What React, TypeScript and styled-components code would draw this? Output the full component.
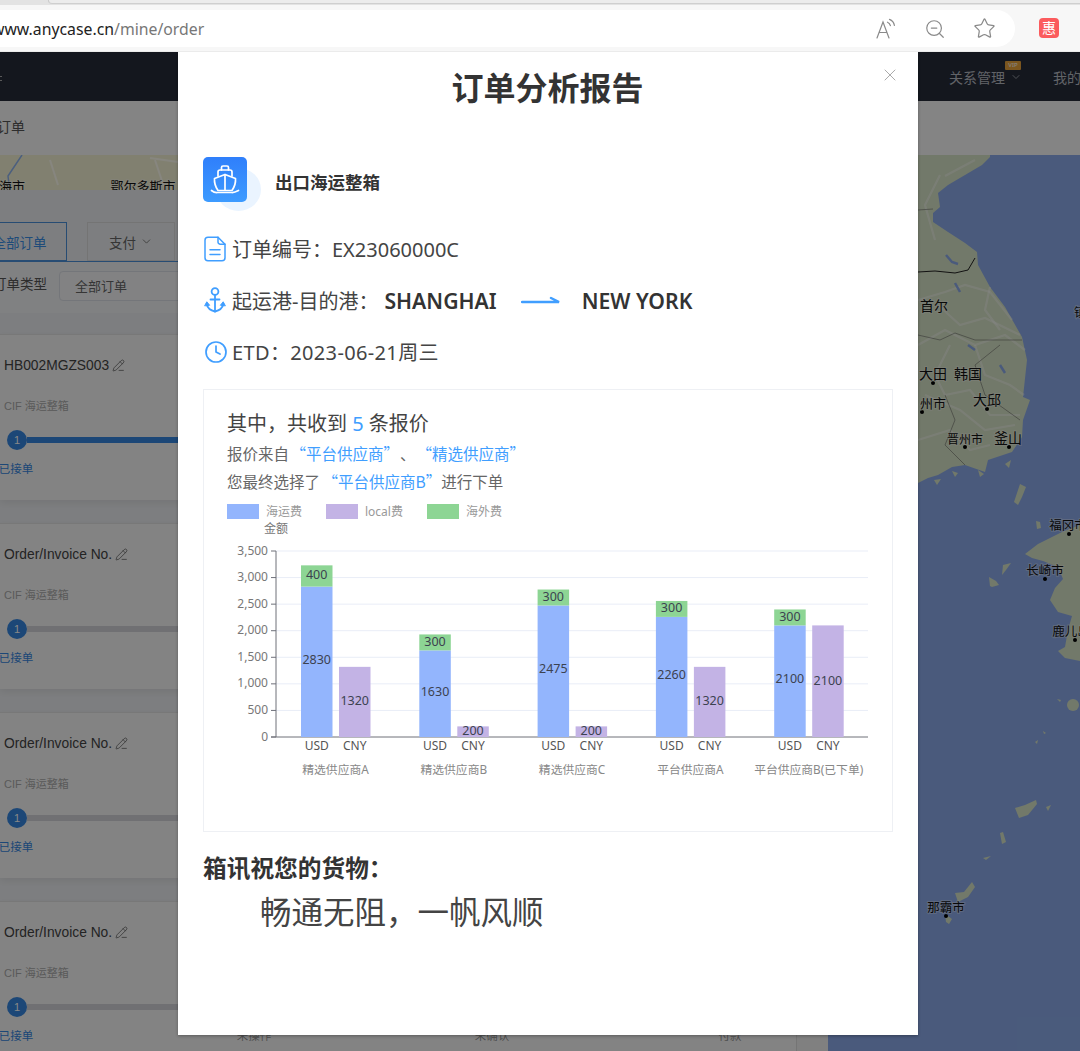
import React from "react";
import styled, { createGlobalStyle } from "styled-components";
import { ChevronDown, Clock, PencilLine, Star, X, ZoomOut } from "lucide-react";

const FONT = `"Noto Sans", "Noto Sans CJK SC", sans-serif`;
const CJK = `"Noto Sans CJK SC", sans-serif`;
const ARIAL = `"Liberation Sans", "Noto Sans CJK SC", sans-serif`;

const GlobalStyle = createGlobalStyle`
  html, body {
    margin: 0;
    padding: 0;
    width: 1080px;
    height: 1051px;
    overflow: hidden;
    font-family: ${FONT};
    background: #fff;
  }
  * { box-sizing: border-box; }
`;

type Stack = { label: string; usd: number; cny: number; extra: number };

const suppliers: Stack[] = [
  { label: "精选供应商A", usd: 2830, cny: 1320, extra: 400 },
  { label: "精选供应商B", usd: 1630, cny: 200, extra: 300 },
  { label: "精选供应商C", usd: 2475, cny: 200, extra: 300 },
  { label: "平台供应商A", usd: 2260, cny: 1320, extra: 300 },
  { label: "平台供应商B(已下单)", usd: 2100, cny: 2100, extra: 300 },
];

const orders = ["HB002MGZS003", "Order/Invoice No.", "Order/Invoice No.", "Order/Invoice No."];

const BLUE = "#93b5fd";
const PURPLE = "#c3b3e5";
const GREEN = "#8dd594";
const LAND = "#d8e4c8";
const AXIS_ZERO = 737;
const AXIS_TOP = 551;
const scale = (AXIS_ZERO - AXIS_TOP) / 3500;

function BarChart() {
  const ticks = [0, 500, 1000, 1500, 2000, 2500, 3000, 3500];
  return (
    <ChartSvg width="660" height="300" viewBox="227 495 660 300">
      <rect x="227" y="504" width="32" height="15" fill={BLUE} />
      <ChartText x="266" y="516" fontSize="12" fill="#999">海运费</ChartText>
      <rect x="326" y="504" width="32" height="15" fill={PURPLE} />
      <ChartText x="365" y="516" fontSize="12" fill="#999">local费</ChartText>
      <rect x="427" y="504" width="32" height="15" fill={GREEN} />
      <ChartText x="466" y="516" fontSize="12" fill="#999">海外费</ChartText>
      <ChartText x="264" y="533" fontSize="12" fill="#777">金额</ChartText>

      {ticks.map((t) => {
        const y = AXIS_ZERO - t * scale;
        return (
          <g key={t}>
            {t > 0 && <line x1="276" x2="868" y1={y} y2={y} stroke="#e9edf7" strokeWidth="1" />}
            <line x1="271" x2="276" y1={y} y2={y} stroke="#6e7079" />
            <ChartText x="268" y={y + 3.5} fontSize="12" fill="#777" textAnchor="end">
              {t.toLocaleString("en-US")}
            </ChartText>
          </g>
        );
      })}
      <line x1="276" x2="276" y1={AXIS_TOP} y2={AXIS_ZERO} stroke="#6e7079" />
      <line x1="271" x2="868" y1={AXIS_ZERO} y2={AXIS_ZERO} stroke="#6e7079" />

      {suppliers.map((s, i) => {
        const x = 301 + i * 118.3;
        const usdH = s.usd * scale;
        const extraH = s.extra * scale;
        const cnyH = s.cny * scale;
        return (
          <g key={s.label}>
            <rect x={x} y={AXIS_ZERO - usdH} width="31.5" height={usdH} fill={BLUE} />
            <rect x={x} y={AXIS_ZERO - usdH - extraH} width="31.5" height={extraH} fill={GREEN} />
            <rect x={x + 38} y={AXIS_ZERO - cnyH} width="31.5" height={cnyH} fill={PURPLE} />
            <ChartText x={x + 15.7} y={AXIS_ZERO - usdH / 2 + 2} fontSize="12.5" fill="#3c4250" textAnchor="middle">{s.usd}</ChartText>
            <ChartText x={x + 15.7} y={AXIS_ZERO - usdH - extraH / 2 + 3.5} fontSize="12.5" fill="#3c4250" textAnchor="middle">{s.extra}</ChartText>
            <ChartText x={x + 53.7} y={AXIS_ZERO - cnyH / 2 + 3.5} fontSize="12.5" fill="#3c4250" textAnchor="middle">{s.cny}</ChartText>
            <ChartText x={x + 15.7} y="750" fontSize="12" fill="#555" textAnchor="middle">USD</ChartText>
            <ChartText x={x + 53.7} y="750" fontSize="12" fill="#555" textAnchor="middle">CNY</ChartText>
            <ChartText x={x + 34.5} y="774" fontSize="11.8" fill="#888" textAnchor="middle">{s.label}</ChartText>
          </g>
        );
      })}
    </ChartSvg>
  );
}

function MapBackdrop() {
  const labels: [string, number, number, number][] = [
    ["海市", 12, 191, 13],
    ["鄂尔多斯市", 143, 191, 13],
    ["首尔", 934, 311, 14],
    ["大田", 933, 379, 14],
    ["韩国", 968, 379, 14],
    ["大邱", 987, 405, 14],
    ["州市", 933, 408, 13],
    ["晋州市", 965, 444, 12],
    ["釜山", 1008, 443, 14],
    ["福冈市", 1068, 530, 12.5],
    ["长崎市", 1045, 575, 12.5],
    ["鹿儿岛", 1071, 636, 12.5],
    ["那霸市", 946, 912, 12.5],
    ["镇", 1080, 317, 12],
  ];
  const dots = [[933, 383], [922, 412], [987, 409], [965, 447], [1009, 447], [1069, 534], [1045, 579], [1075, 640], [946, 916]];
  const roads = [
    "M918 300 L945 292 L965 285 L990 292 L1012 320",
    "M938 305 L960 325 L985 318 L1020 335",
    "M918 345 L945 330 L975 345 L1005 335 L1025 350",
    "M950 345 L935 375 L945 395 L970 390 L990 415 L1020 415",
    "M975 345 L985 375 L1010 385 L1024 395",
    "M925 395 L960 410 L985 430 L1015 425",
    "M990 287 L985 310 L1000 330",
    "M918 440 L950 430 L970 450 L990 445",
    "M940 175 L925 205 L935 240 M975 160 L945 176",
  ];
  const borders = [
    "M918 335 L940 340 L955 333 L975 340 L1000 340 L1022 340",
    "M945 395 L955 420 L945 445 L965 465",
    "M1000 345 L975 365 L985 395 L1020 420",
    "M918 210 L933 209",
  ];
  const islands = [
    "1020,484 1026,487 1022,497 1018,505 1014,502",
    "1036,521 1040,522 1041,528 1037,529",
    "989,577 996,581 999,585 992,587 990,586",
    "1003,565 1011,563 1006,570 1002,575",
    "1015,808 1025,805 1036,800 1037,804 1028,815 1019,818",
    "1000,833 1003,832 1006,842 1002,844",
    "983,858 991,856 986,860",
    "955,893 964,892 972,882 975,887 968,897 958,902",
    "945,914 952,919 949,924 946,922",
    "1046,807 1051,805 1048,811",
    "1057,699 1061,700 1060,702",
    "1035,742 1038,740 1037,744",
    "1043,731 1046,733 1044,734",
    "978,470 984,474 980,477",
    "952,471 958,473 955,477",
    "934,480 941,479 937,485",
    "1005,464 1011,460 1009,468",
  ];
  return (
    <MapSvg viewBox="0 155 1080 896" width="1080" height="896">
      <rect x="0" y="155" width="1080" height="896" fill="#8cabea" />
      <polygon
        fill={LAND}
        points="990,155 990,157 982,165 965,175 948,185 938,193 940,207 933,213 933,222 948,232 965,243 977,252 978,265 990,287 1005,307 1022,337 1027,360 1023,397 1030,400 1023,420 1022,437 1012,452 988,460 985,472 965,465 952,467 938,475 928,478 918,483 900,483 900,155"
      />
      <rect x="0" y="155" width="900" height="40" fill="#f4f2d4" />
      <path d="M22 155 L12 170 L8 176 L10 192" stroke="#8fb4ee" strokeWidth="1.5" fill="none" />
      <path d="M50 160 L58 185 M155 160 L165 190 M150 158 L178 162" stroke="#fffdf0" strokeWidth="2" fill="none" />
      <polygon
        fill={LAND}
        points="1080,525 1062,532 1048,539 1038,544 1025,554 1032,558 1043,561 1058,567 1063,579 1055,588 1050,600 1058,612 1072,616 1068,630 1065,647 1058,651 1065,658 1080,661"
      />
      {islands.map((pts) => (
        <polygon key={pts} fill={LAND} points={pts} />
      ))}
      <circle cx="1073" cy="705" r="6" fill={LAND} />
      {roads.map((d) => (
        <path key={d} d={d} fill="none" stroke="#fff" strokeOpacity="0.4" strokeWidth="2.2" />
      ))}
      <path d="M918 272 L935 271 L955 273 L968 270 L975 258" fill="none" stroke="#222" strokeWidth="1" />
      {borders.map((d) => (
        <path key={d} d={d} fill="none" stroke="#555" strokeOpacity="0.5" strokeWidth="1" />
      ))}
      <path d="M946 255 L952 262 L958 264 M955 283 L960 292 M968 345 L975 350 M1000 365 L1005 373" stroke="#8cabea" strokeWidth="2.5" fill="none" />
      {dots.map(([x, y]) => (
        <circle key={`${x}-${y}`} cx={x} cy={y} r="2" fill="#000" />
      ))}
      {labels.map(([text, x, y, size]) => (
        <MapLabel key={text} x={x} y={y} fontSize={size} textAnchor="middle">
          {text}
        </MapLabel>
      ))}
    </MapSvg>
  );
}

function ShipIcon() {
  return (
    <svg width="30" height="32" viewBox="0 0 30 32" fill="none" stroke="#fff" strokeWidth="1.7" strokeLinecap="round" strokeLinejoin="round">
      <path d="M11.5 6 V3.5 a1.5 1.5 0 0 1 1.5 -1.5 h4 a1.5 1.5 0 0 1 1.5 1.5 V6" />
      <path d="M8 12 V8 a2 2 0 0 1 2 -2 h10 a2 2 0 0 1 2 2 v4" />
      <path d="M15 10.5 L4.5 14.5 c-.3 4 .7 8 3.5 12 h14 c2.8 -4 3.8 -8 3.5 -12 Z" />
      <path d="M15 10.5 V26" />
      <path d="M1.5 26.5 c2 1.6 4 2.2 6 2 h14 c2 .2 4 -.4 7 -2" />
    </svg>
  );
}

function DocIcon() {
  return (
    <svg width="22" height="26" viewBox="0 0 22 26" fill="none" stroke="#409eff" strokeWidth="1.5" strokeLinejoin="round" strokeLinecap="round">
      <path d="M14 1.2 H4 a3 3 0 0 0 -3 3 V21.8 a3 3 0 0 0 3 3 H18 a3 3 0 0 0 3 -3 V8.2 Z" />
      <path d="M14 1.2 V6 a2.2 2.2 0 0 0 2.2 2.2 H21" />
      <path d="M6 13.8 H16 M6 18.6 H16" />
    </svg>
  );
}

function AnchorIcon() {
  return (
    <svg width="22" height="26" viewBox="0 0 22 26" fill="none" stroke="#409eff" strokeWidth="1.8" strokeLinecap="round">
      <circle cx="11" cy="4.5" r="3.4" />
      <path d="M11 8 V24.5 M6.5 12.5 H15.5" />
      <path d="M2.5 17 C3.5 21 7 23.6 11 24.5 C15 23.6 18.5 21 19.5 17" />
      <path d="M0.8 18.5 L2.8 14.8 L5.4 18 Z M21.2 18.5 L19.2 14.8 L16.6 18 Z" fill="#409eff" strokeWidth="1" strokeLinejoin="round" />
    </svg>
  );
}

function ReadAloudIcon() {
  return (
    <svg width="22" height="22" viewBox="0 0 20 22" fill="none" stroke="#8a8a8a" strokeWidth="1.2" strokeLinecap="round">
      <path d="M1 20 L7 4 L13 20 M3.2 14.5 H10.8" />
      <path d="M11.5 4.2 c1.6 .6 2.6 2 2.9 3.4 M13.5 1.4 c2.6 1 4.4 3.2 4.9 6" />
    </svg>
  );
}

export default function App() {
  return (
    <Page>
      <GlobalStyle />
      <TabStrip>
        <TabEdge />
      </TabStrip>
      <Toolbar>
        <AddressPill>
          <Url>
            www.anycase.cn<UrlPath>/mine/order</UrlPath>
          </Url>
          <PillIcons>
            <ReadAloudIcon />
            <ZoomOut size={22} color="#8a8a8a" strokeWidth={1.3} />
            <Star size={23} color="#8a8a8a" strokeWidth={1.3} />
          </PillIcons>
        </AddressPill>
        <ExtensionBadge>惠</ExtensionBadge>
      </Toolbar>

      <Stage>
        <NavBar>
          <NavBurger />
          <NavItem>
            关系管理
            <VipTag>VIP</VipTag>
            <ChevronDown size={12} strokeWidth={1.5} />
          </NavItem>
          <NavItem>我的账户</NavItem>
        </NavBar>
        <Crumb>
          <CrumbText>订单</CrumbText>
        </Crumb>

        <MapArea>
          <MapBackdrop />
          <OrderPanel>
            <FilterTabs>
              <FilterTab $active>全部订单</FilterTab>
              <FilterTab>
                支付 <ChevronDown size={13} strokeWidth={1.5} />
              </FilterTab>
            </FilterTabs>
            <FilterRow>
              <FilterLabel>订单类型</FilterLabel>
              <FilterSelect>全部订单</FilterSelect>
            </FilterRow>
            {orders.map((no, i) => (
              <OrderCard key={`${no}-${i}`}>
                <OrderNo>
                  {no} <PencilLine size={13} strokeWidth={1.2} />
                </OrderNo>
                <OrderType>CIF 海运整箱</OrderType>
                <StepTrack>
                  <StepDot>1</StepDot>
                  <StepLine $done={i === 0} />
                </StepTrack>
                <StepLabels>
                  <StepLabel $active>已接单</StepLabel>
                  <StepLabel>未操作</StepLabel>
                  <StepLabel>未确认</StepLabel>
                  <StepLabel>付款</StepLabel>
                </StepLabels>
              </OrderCard>
            ))}
          </OrderPanel>
          <PanelGutter />
        </MapArea>

        <Overlay />

        <Modal>
          <CloseButton>
            <X size={20} strokeWidth={1} />
          </CloseButton>
          <Title>订单分析报告</Title>

          <ServiceRow>
            <ServiceIcon>
              <ShipIcon />
            </ServiceIcon>
            <ServiceName>出口海运整箱</ServiceName>
          </ServiceRow>

          <InfoRow>
            <InfoIcon>
              <DocIcon />
            </InfoIcon>
            订单编号：EX23060000C
          </InfoRow>
          <InfoRow>
            <InfoIcon>
              <AnchorIcon />
            </InfoIcon>
            起运港-目的港：
            <Port $left={6}>SHANGHAI</Port>
            <RouteArrow width="40" height="10" viewBox="0 0 40 10" fill="none" stroke="#409eff" strokeWidth="2.5" strokeLinecap="round">
              <path d="M1 7 H38 L30 3" />
            </RouteArrow>
            <Port $left={0}>NEW YORK</Port>
          </InfoRow>
          <InfoRow $spread>
            <InfoIcon>
              <Clock size={24} color="#409eff" strokeWidth={1.7} />
            </InfoIcon>
            ETD：2023-06-21周三
          </InfoRow>

          <ReportBox>
            <ReportTitle>
              其中，共收到 <Accent>5</Accent> 条报价
            </ReportTitle>
            <ReportLine>
              报价来自<Accent $gap={1.5}>“平台供应商”</Accent>
              <Pause>、</Pause>
              <Accent $gap={1}>“精选供应商”</Accent>
            </ReportLine>
            <ReportLine>
              您最终选择了<Accent $gap={2.5}>“平台供应商B”</Accent>进行下单
            </ReportLine>
            <BarChart />
          </ReportBox>

          <WishTitle>箱讯祝您的货物：</WishTitle>
          <WishText>畅通无阻，一帆风顺</WishText>
        </Modal>
      </Stage>
    </Page>
  );
}

const Page = styled.div`
  width: 1080px;
  height: 1051px;
  overflow: hidden;
  display: flex;
  flex-direction: column;
`;

const TabStrip = styled.div`
  height: 5px;
  background: #e3e3e3;
  padding-left: 48px;
`;

const TabEdge = styled.div`
  height: 4px;
  background: #ececec;
  border-left: 1px solid #c9c9c9;
  border-bottom: 1px solid #cfcfcf;
  border-bottom-left-radius: 4px;
`;

const Toolbar = styled.div`
  height: 47px;
  background: #f7f7f7;
  display: flex;
  align-items: flex-start;
  padding-top: 5px;
  border-bottom: 1px solid #ebebeb;
`;

const AddressPill = styled.div`
  width: 1015px;
  height: 37px;
  background: #fff;
  border-radius: 0 19px 19px 0;
  display: flex;
  align-items: center;
  justify-content: space-between;
  padding-right: 19px;
  overflow: hidden;
`;

const Url = styled.div`
  margin-left: -8px;
  font-size: 15.8px;
  color: #222;
`;

const UrlPath = styled.span`
  color: #777;
`;

const PillIcons = styled.div`
  display: flex;
  align-items: center;
  gap: 27px;
`;

const ExtensionBadge = styled.div`
  width: 20px;
  height: 20px;
  margin: 8px 0 0 24px;
  border-radius: 4px;
  background: #fb5b5d;
  color: #fff;
  font-size: 14px;
  line-height: 20px;
  text-align: center;
`;

const Stage = styled.div`
  position: relative;
  flex: 1;
  display: flex;
  flex-direction: column;
  overflow: hidden;
`;

const NavBar = styled.div`
  height: 49px;
  background: #262c3a;
  display: flex;
  align-items: center;
  padding-left: 949px;
  gap: 31px;
  flex-shrink: 0;
  white-space: nowrap;
`;

const NavBurger = styled.div`
  position: absolute;
  left: -6px;
  top: 24px;
  width: 8px;
  height: 5px;
  border-top: 1px solid #aaa;
  border-bottom: 1px solid #aaa;
`;

const NavItem = styled.div`
  position: relative;
  display: flex;
  align-items: center;
  gap: 5px;
  font-size: 14px;
  color: #b8bbc2;
`;

const VipTag = styled.span`
  position: absolute;
  left: 56px;
  top: -6px;
  width: 16px;
  height: 9px;
  border-radius: 1px;
  background: #e8a33c;
  color: #fff;
  font-size: 6px;
  line-height: 9px;
  text-align: center;
`;

const Crumb = styled.div`
  height: 54px;
  padding-bottom: 5px;
  background: #fafafa;
  display: flex;
  align-items: center;
  flex-shrink: 0;
`;

const CrumbText = styled.div`
  margin-left: -3px;
  font-size: 14px;
  color: #555;
`;

const MapArea = styled.div`
  position: relative;
  flex: 1;
  display: flex;
  align-items: stretch;
  padding-top: 35px;
  overflow: hidden;
`;

const MapSvg = styled.svg`
  position: absolute;
  left: 0;
  top: 0;
`;

const MapLabel = styled.text`
  font-family: ${CJK};
  fill: #111;
  stroke: #fff;
  stroke-width: 2px;
  stroke-opacity: 0.35;
  paint-order: stroke;
`;

const OrderPanel = styled.div`
  position: relative;
  width: 796px;
  flex-shrink: 0;
  background: #edeff2;
  padding-top: 32px;
  overflow: hidden;
`;

const PanelGutter = styled.div`
  position: relative;
  width: 32px;
  flex-shrink: 0;
  background: #f2f2f2;
  border-left: 1px solid #ddd;
`;

const FilterTabs = styled.div`
  display: flex;
  height: 40px;
  gap: 20px;
  margin-left: -20px;
  border-bottom: 1px solid #4a90d9;
`;

const FilterTab = styled.div<{ $active?: boolean }>`
  width: ${(p) => (p.$active ? 87 : 88)}px;
  height: 39px;
  padding-right: ${(p) => (p.$active ? 8 : 0)}px;
  display: flex;
  align-items: center;
  justify-content: center;
  gap: 4px;
  font-size: 13.5px;
  color: ${(p) => (p.$active ? "#3a8ee6" : "#666")};
  border: 1px solid ${(p) => (p.$active ? "#4a90d9" : "#dcdcdc")};
`;

const FilterRow = styled.div`
  height: 51px;
  padding-top: 9px;
  margin-bottom: 21px;
  display: flex;
  gap: 12px;
  margin-left: -7px;
  background: #f2f3f5;
`;

const FilterLabel = styled.div`
  font-size: 13.5px;
  line-height: 26px;
  color: #555;
`;

const FilterSelect = styled.div`
  width: 400px;
  height: 30px;
  padding-left: 15px;
  font-size: 13px;
  line-height: 29px;
  color: #666;
  border: 1px solid #dcdfe6;
  border-radius: 4px;
  background: #f5f6f8;
`;

const OrderCard = styled.div`
  height: 166px;
  margin-bottom: 23px;
  padding: 21px 0 0 4px;
  background: #f8f8f8;
  border-top: 1px solid #e3e3e3;
  box-shadow: 0 3px 8px rgba(0, 0, 0, 0.08);
`;

const OrderNo = styled.div`
  display: flex;
  align-items: center;
  gap: 3px;
  height: 18px;
  font-family: ${ARIAL};
  font-size: 13.8px;
  color: #444;
`;

const OrderType = styled.div`
  margin-top: 24px;
  height: 16px;
  font-family: ${ARIAL};
  font-size: 11px;
  line-height: 16px;
  color: #aaa;
`;

const StepTrack = styled.div`
  display: flex;
  align-items: center;
  margin: 16px 0 0 3px;
`;

const StepDot = styled.div`
  width: 20px;
  height: 20px;
  flex-shrink: 0;
  border-radius: 50%;
  background: #3586e0;
  color: #fff;
  font-family: ${ARIAL};
  font-size: 11px;
  line-height: 20px;
  text-align: center;
`;

const StepLine = styled.div<{ $done: boolean }>`
  flex: 1;
  height: 6px;
  background: ${(p) => (p.$done ? "#3586e0" : "#d4d4da")};
`;

const StepLabels = styled.div`
  display: grid;
  grid-template-columns: repeat(4, 238px);
  margin: 10px 0 0 -107px;
`;

const StepLabel = styled.div<{ $active?: boolean }>`
  text-align: center;
  font-size: 11.5px;
  line-height: 18px;
  color: ${(p) => (p.$active ? "#3586e0" : "#999")};
`;

const Overlay = styled.div`
  position: absolute;
  inset: 0;
  background: rgba(0, 0, 0, 0.47);
`;

const Modal = styled.div`
  position: absolute;
  left: 178px;
  top: 0;
  width: 740px;
  height: 983px;
  background: #fff;
  padding: 0 25px;
  box-shadow: 0 1px 3px rgba(0, 0, 0, 0.3);
`;

const CloseButton = styled.div`
  position: absolute;
  right: 18px;
  top: 13px;
  color: #999;
  display: flex;
`;

const Title = styled.h1`
  margin: 0;
  height: 72px;
  padding-right: 1px;
  font-size: 32px;
  line-height: 72px;
  font-weight: 700;
  text-align: center;
  color: #333;
`;

const ServiceRow = styled.div`
  display: flex;
  align-items: center;
  gap: 28px;
  margin-top: 33px;
  height: 45px;
`;

const ServiceIcon = styled.div`
  position: relative;
  width: 44px;
  height: 45px;
  display: flex;
  align-items: center;
  justify-content: center;
  border-radius: 5px;

  &::before {
    content: "";
    position: absolute;
    left: 13px;
    top: 11px;
    width: 45px;
    height: 43px;
    border-radius: 50%;
    background: #eaf4ff;
  }

  &::after {
    content: "";
    position: absolute;
    inset: 0;
    border-radius: 5px;
    background: linear-gradient(180deg, #2f7ffb, #3d9bff);
  }

  svg {
    position: relative;
    z-index: 1;
  }
`;

const ServiceName = styled.div`
  font-size: 17.5px;
  font-weight: 700;
  color: #333;
  position: relative;
  top: 2px;
`;

const InfoRow = styled.div<{ $spread?: boolean }>`
  display: flex;
  align-items: center;
  height: 30px;
  margin-top: 21.5px;
  font-size: 20px;
  letter-spacing: ${(p) => (p.$spread ? "0.35px" : "0")};
  color: #444;
  white-space: pre;

  ${ServiceRow} + & {
    margin-top: 31.5px;
  }
`;

const InfoIcon = styled.span`
  width: 29px;
  display: flex;
  padding-left: 1px;
`;

const Port = styled.span<{ $left: number }>`
  margin-left: ${(p) => p.$left}px;
  font-size: 21.2px;
  font-weight: 600;
  color: #333;
`;

const RouteArrow = styled.svg`
  margin: 0 21px 0 24px;
`;

const ReportBox = styled.div`
  margin-top: 22.5px;
  height: 443px;
  padding: 19px 0 0 23px;
  border: 1px solid #eef0f4;
`;

const ReportTitle = styled.div`
  font-size: 20px;
  line-height: 30px;
  color: #444;
`;

const Accent = styled.span<{ $gap?: number }>`
  color: #409eff;
  margin-left: ${(p) => p.$gap ?? 0}px;
`;

const Pause = styled.span`
  margin-left: 1px;
`;

const ReportLine = styled.div`
  font-family: ${CJK};
  font-size: 15.5px;
  line-height: 28px;
  color: #666;
  white-space: pre;
  text-spacing-trim: space-all;
`;

const ChartSvg = styled.svg`
  display: block;
`;

const ChartText = styled.text`
  font-family: ${FONT};
`;

const WishTitle = styled.div`
  margin-top: 21px;
  font-size: 23.7px;
  line-height: 30px;
  font-weight: 700;
  color: #333;
`;

const WishText = styled.div`
  margin: 7px 0 0 57px;
  font-size: 31.5px;
  line-height: 44px;
  color: #444;
`;
